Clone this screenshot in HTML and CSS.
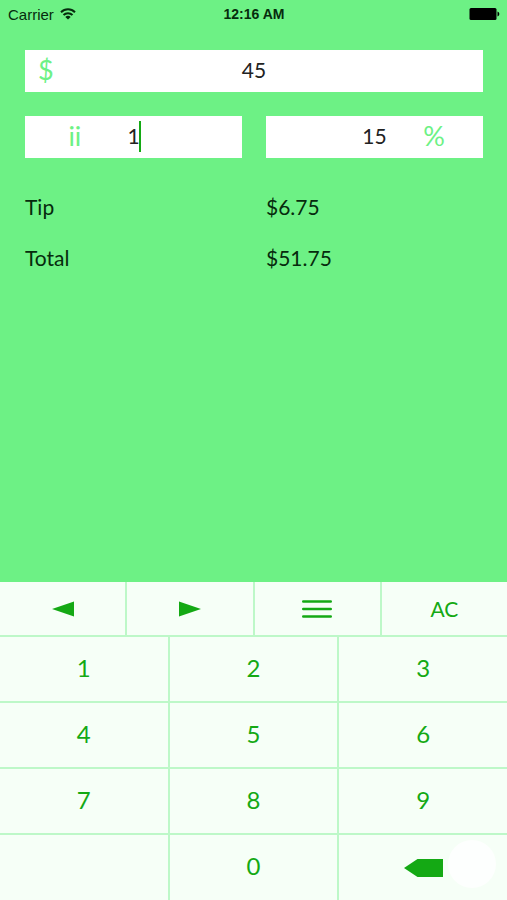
FILE: index.html
```
<!DOCTYPE html>
<html lang="en">
<head>
    <meta charset="UTF-8">
    <meta name="viewport" content="width=device-width, initial-scale=1">
    <title>Tip Calculator</title>
    <link rel="stylesheet" href="styles.css">
</head>
<body>
    <header class="status">
        <div class="status-carrier">
            Carrier
            <svg class="icon-wifi" width="16" height="12" viewBox="0 0 16 12" fill="none" stroke="#062b0d" stroke-width="2">
                <path d="M1 4.2a10 10 0 0 1 14 0M3.5 7a6.4 6.4 0 0 1 9 0"/>
                <path d="M8 11.5L5.3 9a3.8 3.8 0 0 1 5.4 0z" fill="#062b0d" stroke="none"/>
            </svg>
        </div>
        <time class="status-time">12:16 AM</time>
        <svg class="icon-battery" width="31" height="12" viewBox="0 0 31 12">
            <rect x="0.5" width="27" height="12" rx="1.5"/>
            <path d="M28.5 3.5c2.4.9 2.4 4.1 0 5z"/>
        </svg>
    </header>

    <main class="main">
        <form class="bill">
            <div class="field field-amount">
                <label class="field-sign" for="amount">$</label>
                <input class="field-input" id="amount" type="text" inputmode="none" value="45">
            </div>
            <div class="field field-people">
                <label class="field-sign" for="people">ii</label>
                <input class="field-input" id="people" type="text" inputmode="none" value="1">
                <i class="field-caret"></i>
            </div>
            <div class="field field-percent">
                <input class="field-input" id="percent" type="text" inputmode="none" value="15">
                <label class="field-sign" for="percent">%</label>
            </div>
        </form>

        <dl class="result">
            <dt>Tip</dt>
            <dd>$6.75</dd>
            <dt>Total</dt>
            <dd>$51.75</dd>
        </dl>
    </main>

    <section class="keyboard">
        <div class="toolbar">
            <button type="button" class="key key-icon" aria-label="Previous">
                <svg width="22" height="16" viewBox="0 0 22 16"><path d="M0 8L22 0.5v15z"/></svg>
            </button>
            <button type="button" class="key key-icon" aria-label="Next">
                <svg width="22" height="16" viewBox="0 0 22 16"><path d="M22 8L0 0.5v15z"/></svg>
            </button>
            <button type="button" class="key key-icon" aria-label="Menu">
                <svg width="30" height="18" viewBox="0 0 30 18" stroke="#14a914" stroke-width="2.4" stroke-linecap="round"><path d="M1.2 1.5h27.6M1.2 9h27.6M1.2 16.5h27.6"/></svg>
            </button>
            <button type="button" class="key key-clear">AC</button>
        </div>
        <div class="pad">
            <button type="button" class="key">1</button>
            <button type="button" class="key">2</button>
            <button type="button" class="key">3</button>
            <button type="button" class="key">4</button>
            <button type="button" class="key">5</button>
            <button type="button" class="key">6</button>
            <button type="button" class="key">7</button>
            <button type="button" class="key">8</button>
            <button type="button" class="key">9</button>
            <span class="key"></span>
            <button type="button" class="key">0</button>
            <button type="button" class="key key-icon" aria-label="Delete">
                <svg width="39" height="18" viewBox="0 0 39 18"><path d="M0 9L13.5 0H39v18H13.5z"/></svg>
                <i class="touch"></i>
            </button>
        </div>
    </section>
</body>
</html>
```

FILE: styles.css
```
* {
    box-sizing: border-box;
}
body {
    display: flex;
    flex-direction: column;
    min-height: 100vh;
    margin: 0;
    background-color: #6df185;
    color: #062b0d;
    font-family: Lato, "Noto Sans", sans-serif;
    font-size: 21px;
}

/* status bar */
.status {
    display: grid;
    grid-template-columns: 1fr auto 1fr;
    align-items: center;
    height: 28px;
    padding: 0 7px 0 8px;
    font-family: "Liberation Sans", Arial, sans-serif;
    font-size: 14px;
}
.status-carrier {
    display: flex;
    align-items: center;
    gap: 6px;
    font-size: 15px;
}
.status-time {
    font-weight: bold;
}
.icon-battery {
    justify-self: end;
    fill: #000;
}

/* bill */
.main {
    flex: 1;
    padding: 22px 24px 24px 25px;
}
.bill {
    display: grid;
    grid-template-columns: 1fr 1fr;
    gap: 24px;
}
.field {
    position: relative;
    height: 42px;
}
.field-amount {
    grid-column: 1 / -1;
}
.field-input {
    display: block;
    width: 100%;
    height: 100%;
    border: 0;
    border-radius: 0;
    padding: 0 0 4px;
    background-color: #fff;
    color: #222;
    font: inherit;
    text-align: center;
    outline: 0;
}
.field-sign {
    position: absolute;
    top: 0;
    left: 13px;
    color: #6df185;
    font-size: 27px;
    line-height: 40px;
}
.field-people .field-sign {
    left: 20%;
}
.field-percent .field-sign {
    right: 38px;
    left: auto;
}
.field-caret {
    position: absolute;
    top: 5px;
    left: 50%;
    width: 2px;
    height: 31px;
    margin-left: 5px;
    background-color: #14a914;
}

.result {
    display: grid;
    grid-template-columns: 1fr 1fr;
    gap: 24px;
    margin: 35px 0 0;
    line-height: 27px;
}
.result dd {
    margin: 0;
}

/* keyboard, the lines between the keys are the gaps */
.keyboard,
.toolbar,
.pad {
    display: grid;
    gap: 2px;
}
.keyboard {
    background-color: #bdf8c8;
}
.toolbar {
    grid-template-columns: repeat(4, 1fr);
    grid-template-rows: 53px;
}
.pad {
    grid-template-columns: repeat(3, 1fr);
    grid-template-rows: repeat(3, 64px) 65px;
}
.key {
    position: relative;
    display: flex;
    align-items: center;
    justify-content: center;
    border: 0;
    padding: 0 0 4px;
    background-color: #f6fff7;
    color: #14a914;
    font: inherit;
    font-size: 24px;
}
.key svg {
    fill: #14a914;
}
.key-icon {
    padding: 0;
}
.key-clear {
    padding: 0;
    font-size: 21px;
}
.touch {
    position: absolute;
    right: 11px;
    bottom: 12px;
    width: 48px;
    height: 48px;
    border-radius: 50%;
    background-color: #fff;
    opacity: .8;
}
```
